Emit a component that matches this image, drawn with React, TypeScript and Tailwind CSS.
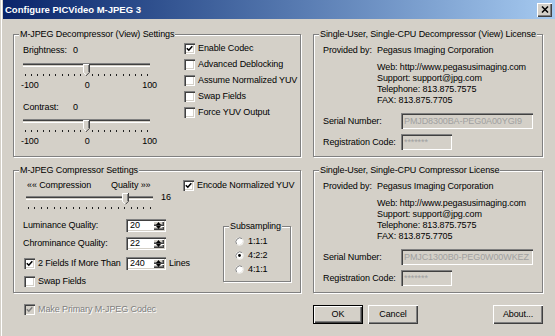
import React from "react";

const sunken =
  "shadow-[inset_1px_1px_0_#808080,inset_2px_2px_0_#404040,inset_-1px_-1px_0_#ffffff,inset_-2px_-2px_0_#d4d0c8]";
const raised =
  "shadow-[inset_1px_1px_0_#ffffff,inset_-1px_-1px_0_#404040,inset_-2px_-2px_0_#808080]";

function Group({
  title,
  className,
  children,
}: {
  title: string;
  className?: string;
  children?: React.ReactNode;
}) {
  return (
    <div
      className={
        "relative border border-[#808080] shadow-[inset_1px_1px_0_#ffffff,1px_1px_0_#ffffff] " +
        (className ?? "")
      }
    >
      <span className="absolute left-[5px] -top-[6px] bg-[#d4d0c8] px-[1px] whitespace-nowrap">
        {title}
      </span>
      {children}
    </div>
  );
}

function Check({
  label,
  checked,
  disabled,
}: {
  label: string;
  checked?: boolean;
  disabled?: boolean;
}) {
  return (
    <div className="flex items-center gap-[3px] h-[11px] whitespace-nowrap">
      <span
        className={`w-[11px] h-[11px] shrink-0 flex items-center justify-center ${
          disabled ? "bg-[#d4d0c8]" : "bg-white"
        } ${sunken}`}
      >
        {checked && (
          <svg width="7" height="7" viewBox="0 0 7 7">
            <path
              d="M0.8 3.2 L2.8 5.2 L6.3 1.2"
              stroke={disabled ? "#808080" : "#000"}
              strokeWidth="1.6"
              fill="none"
            />
          </svg>
        )}
      </span>
      <span className={disabled ? "text-[#808080] [text-shadow:1px_1px_0_#ffffff]" : ""}>
        {label}
      </span>
    </div>
  );
}

function Radio({ label, checked }: { label: string; checked?: boolean }) {
  return (
    <div className="flex items-center gap-[4px] h-[11px]">
      <svg width="9" height="9" viewBox="0 0 9 9">
        <circle cx="4.5" cy="4.5" r="4" fill="#ffffff" />
        <path d="M1.7 7.3 A4 4 0 0 1 7.3 1.7" stroke="#808080" strokeWidth="1" fill="none" />
        <path d="M7.3 1.7 A4 4 0 0 1 1.7 7.3" stroke="#e8e6e1" strokeWidth="1" fill="none" />
        {checked && <circle cx="4.5" cy="4.5" r="1.4" fill="#000" />}
      </svg>
      <span>{label}</span>
    </div>
  );
}

function Slider({ ticks, pos }: { ticks: number; pos: number }) {
  const left = Math.round(2 + pos * 123 - 3.5);
  return (
    <div className="relative w-[127px] h-[17px]">
      <div className="mt-[4px] h-[4px] border-t border-t-[#808080] border-b border-b-white bg-[#d4d0c8] shadow-[inset_0_1px_0_#404040]" />
      <div className="mt-[7px] flex justify-between px-[2px]">
        {Array.from({ length: ticks }).map((_, i) => (
          <span key={i} className="w-[1px] h-[2px] bg-[#202020]" />
        ))}
      </div>
      <svg className="absolute top-[1px]" style={{ left }} width="7" height="12" viewBox="0 0 7 12">
        <path d="M0 0 H7 V8 L3.5 11.5 L0 8 Z" fill="#d4d0c8" />
        <path d="M0.5 8.5 V0.5 H6" stroke="#ffffff" strokeWidth="1" fill="none" />
        <path d="M0.5 8.3 L3.4 11.2" stroke="#ffffff" strokeWidth="1" fill="none" />
        <path d="M6.5 0 V8.3 L3.5 11.3" stroke="#404040" strokeWidth="1" fill="none" />
        <path d="M5.5 1 V8" stroke="#808080" strokeWidth="1" fill="none" />
      </svg>
    </div>
  );
}

function Scale() {
  return (
    <div className="flex w-[136px] -ml-[2px]">
      <span>-100</span>
      <span className="ml-[46px]">0</span>
      <span className="ml-auto">100</span>
    </div>
  );
}

function SpinArrow({ up }: { up?: boolean }) {
  return (
    <div className={`flex-1 bg-[#d4d0c8] flex items-center justify-center ${raised}`}>
      <svg width="5" height="3" viewBox="0 0 5 3">
        <path d={up ? "M2.5 0 L5 3 H0 Z" : "M0 0 H5 L2.5 3 Z"} fill="#000" />
      </svg>
    </div>
  );
}

function Spin({ value }: { value: string }) {
  return (
    <div className={`flex h-[13px] w-[40px] bg-white ${sunken}`}>
      <span className="flex-1 pl-[4px] leading-[13px]">{value}</span>
      <div className="flex flex-col my-[2px] mr-[2px] w-[11px]">
        <SpinArrow up />
        <SpinArrow />
      </div>
    </div>
  );
}

function Field({ className, children }: { className: string; children: React.ReactNode }) {
  return (
    <div
      className={`h-[16px] bg-[#d4d0c8] pl-[3px] leading-[16px] text-[#a0a0a0] whitespace-nowrap overflow-hidden ${sunken} ${className}`}
    >
      {children}
    </div>
  );
}

function License({ serial }: { serial: string }) {
  return (
    <div className="pl-[9px] pt-[10px]">
      <div className="flex">
        <span className="w-[54px]">Provided by:</span>
        <span>Pegasus Imaging Corporation</span>
      </div>
      <div className="pl-[54px] mt-[6px] flex flex-col">
        <span>Web: http://www.pegasusimaging.com</span>
        <span>Support: support@jpg.com</span>
        <span>Telephone: 813.875.7575</span>
        <span>FAX: 813.875.7705</span>
      </div>
      <div className="flex items-center mt-[7px]">
        <span className="w-[78px]">Serial Number:</span>
        <Field className="w-[132px]">{serial}</Field>
      </div>
      <div className="flex items-center mt-[5px]">
        <span className="w-[78px]">Registration Code:</span>
        <Field className="w-[51px]">*******</Field>
      </div>
    </div>
  );
}

function Button({ label, primary }: { label: string; primary?: boolean }) {
  return (
    <div
      className={`w-[50px] h-[19px] flex items-center justify-center bg-[#d4d0c8] ${raised} ${
        primary ? "border border-black" : ""
      }`}
    >
      {label}
    </div>
  );
}

export default function App() {
  return (
    <div className="w-[555px] h-[336px] overflow-hidden bg-[#d4d0c8] pl-[3px] text-[9px] leading-[11px] tracking-[-0.1px] text-black font-['Liberation_Sans',Arial,sans-serif] shadow-[inset_1px_0_0_#d4d0c8,inset_2px_0_0_#ffffff]">
      {/* title bar */}
      <div className="h-[19px] flex items-center bg-linear-to-r from-[#0a246a] to-[#a6caf0] pl-[2px] pr-[3px]">
        <span className="text-white font-bold text-[9.5px] tracking-normal">Configure PICVideo M-JPEG 3</span>
        <div className={`ml-auto w-[15px] h-[14px] bg-[#d4d0c8] flex items-center justify-center ${raised}`}>
          <svg width="8" height="7" viewBox="0 0 8 7">
            <path d="M1 0.5 L7 6.5 M7 0.5 L1 6.5" stroke="#000" strokeWidth="1.5" />
          </svg>
        </div>
      </div>

      <div className="pl-[10px] pt-[15px]">
        <div className="grid grid-cols-[288px_230px] gap-x-[12px] gap-y-[13px]">
          <Group title="M-JPEG Decompressor (View) Settings" className="h-[123px]">
            <div className="flex">
              <div className="w-[170px] pl-[9px] pt-[10px]">
                <div className="flex">
                  <span className="w-[50px]">Brightness:</span>
                  <span>0</span>
                </div>
                <div className="mt-[7px]">
                  <Slider ticks={21} pos={0.5} />
                </div>
                <Scale />
                <div className="flex mt-[11px]">
                  <span className="w-[50px]">Contrast:</span>
                  <span>0</span>
                </div>
                <div className="mt-[6px]">
                  <Slider ticks={21} pos={0.5} />
                </div>
                <Scale />
              </div>
              <div className="pt-[8px] flex flex-col gap-[5px]">
                <Check checked label="Enable Codec" />
                <Check label="Advanced Deblocking" />
                <Check label="Assume Normalized YUV" />
                <Check label="Swap Fields" />
                <Check label="Force YUV Output" />
              </div>
            </div>
          </Group>

          <Group title="Single-User, Single-CPU Decompressor (View) License" className="h-[123px]">
            <License serial="PMJD8300BA-PEG0A00YGI9" />
          </Group>

          <Group title="M-JPEG Compressor Settings" className="h-[123px]">
            <div className="pt-[9px] flex">
              <div className="w-[169px] pl-[12px]">
                <div className="flex pl-[1px]">
                  <span className="w-[84px]">«« Compression</span>
                  <span>Quality »»</span>
                </div>
                <div className="flex mt-[1px]">
                  <Slider ticks={20} pos={15 / 19} />
                  <span className="ml-[8px]">16</span>
                </div>
              </div>
              <Check checked label="Encode Normalized YUV" />
            </div>
            <div className="flex">
              <div className="w-[209px]">
                <div className="flex items-center h-[13px] mt-[10px] pl-[9px]">
                  <span className="w-[103px]">Luminance Quality:</span>
                  <Spin value="20" />
                </div>
                <div className="flex items-center h-[13px] mt-[5px] pl-[9px]">
                  <span className="w-[103px]">Chrominance Quality:</span>
                  <Spin value="22" />
                </div>
                <div className="flex items-center h-[13px] mt-[7px] pl-[10px]">
                  <div className="w-[102px]">
                    <Check checked label="2 Fields If More Than" />
                  </div>
                  <Spin value="240" />
                  <span className="ml-[3px]">Lines</span>
                </div>
                <div className="mt-[6px] pl-[10px]">
                  <Check label="Swap Fields" />
                </div>
              </div>
              <Group title="Subsampling" className="mt-[17px] w-[68px] h-[56px]">
                <div className="pt-[9px] pl-[11px] flex flex-col gap-[3px]">
                  <Radio label="1:1:1" />
                  <Radio checked label="4:2:2" />
                  <Radio label="4:1:1" />
                </div>
              </Group>
            </div>
          </Group>

          <Group title="Single-User, Single-CPU Compressor License" className="h-[123px]">
            <License serial="PMJC1300B0-PEG0W00WKEZ" />
          </Group>
        </div>

        <div className="flex">
          <div className="w-[288px] pl-[11px] pt-[11px]">
            <Check checked disabled label="Make Primary M-JPEG Codec" />
          </div>
          <div className="ml-[12px] w-[230px] pt-[12px] flex">
            <Button primary label="OK" />
            <div className="ml-[5px]">
              <Button label="Cancel" />
            </div>
            <div className="ml-auto">
              <Button label="About..." />
            </div>
          </div>
        </div>
      </div>
    </div>
  );
}
